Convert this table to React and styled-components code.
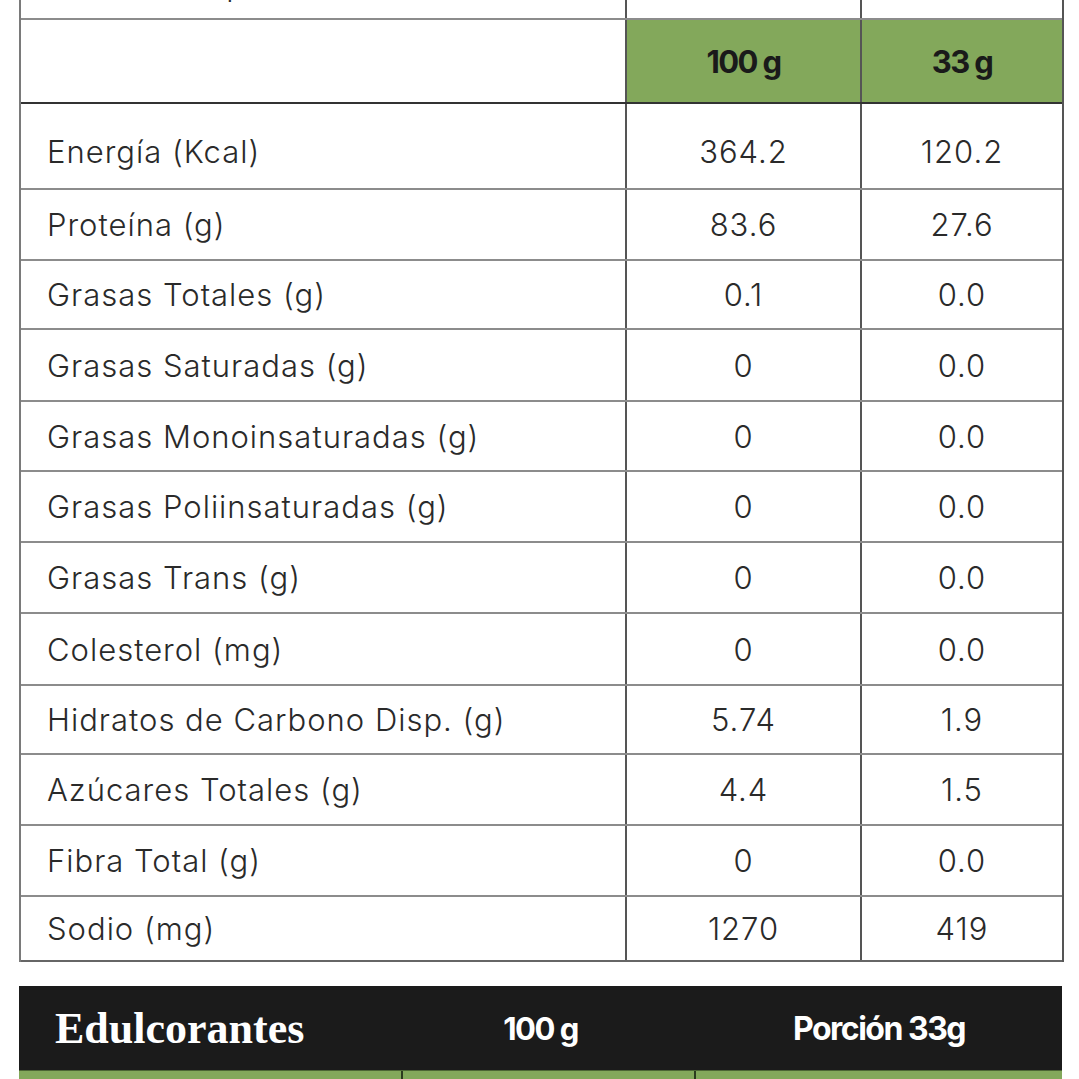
import styled, { createGlobalStyle } from "styled-components";

const GlobalStyle = createGlobalStyle`
  html, body {
    margin: 0;
    padding: 0;
    background: #ffffff;
  }
  body {
    font-family: Inter, "Open Sans", "Liberation Sans", sans-serif;
    color: #2a2a2a;
  }
`;

const Page = styled.div`
  width: 1079px;
  height: 1079px;
  overflow: hidden;
  padding-left: 19px;
  box-sizing: border-box;
`;

const Table = styled.div`
  width: 1045px;
  border-left: 2px solid #7a7a7a;
  border-right: 2px solid #555;
  box-sizing: border-box;
`;

const Row = styled.div`
  display: grid;
  grid-template-columns: 606px 235px 1fr;
  height: ${(p) => p.$h}px;
  border-bottom: 2px solid ${(p) => (p.$dark ? "#333" : p.$end ? "#666" : "#8c8c8c")};
  box-sizing: border-box;
  overflow: hidden;
`;

const Cell = styled.div`
  display: flex;
  align-items: ${(p) => (p.$top ? "flex-end" : "center")};
  justify-content: ${(p) => (p.$label ? "flex-start" : "center")};
  padding-left: ${(p) => (p.$label ? "26px" : "0")};
  padding-top: ${(p) => p.$pt || 0}px;
  border-right: ${(p) => (p.$last ? "none" : "2px solid #555")};
  background: ${(p) => (p.$green ? "#83a85b" : "transparent")};
  font-size: 31px;
  font-weight: 300;
  letter-spacing: 1px;
  white-space: nowrap;
  overflow: hidden;
  box-sizing: border-box;
`;

const Clipped = styled.span`
  margin-bottom: 15px;
`;

const HeadText = styled.span`
  font-family: Inter, "Liberation Sans", sans-serif;
  font-weight: 700;
  font-size: 31px;
  letter-spacing: -1.6px;
  color: #1a1a1a;
`;

const Sweet = styled.div`
  margin-top: 24px;
  width: 1043px;
  background: #1b1b1b;
`;

const SweetHead = styled.div`
  display: grid;
  grid-template-columns: 384px 293px 1fr;
  height: 84px;
  align-items: center;
`;

const SweetTitle = styled.div`
  font-family: "Liberation Serif", "DejaVu Serif", serif;
  font-weight: 700;
  font-size: 44px;
  color: #ffffff;
  padding-left: 36px;
`;

const SweetCol = styled.div`
  font-family: Inter, "Liberation Sans", sans-serif;
  font-weight: 700;
  font-size: ${(p) => p.$fs || 31}px;
  letter-spacing: -1.5px;
  color: #ffffff;
  text-align: center;
  padding-right: ${(p) => p.$pr || 0}px;
`;

const GreenRow = styled.div`
  display: grid;
  grid-template-columns: 384px 293px 1fr;
  height: 40px;
  background: #83a85b;
  border-top: 1px solid #4c6634;
`;

const GreenCell = styled.div`
  border-right: ${(p) => (p.$last ? "none" : "2px solid #2b3a1f")};
`;

const rows = [
  ["Energía (Kcal)", "364.2", "120.2"],
  ["Proteína (g)", "83.6", "27.6"],
  ["Grasas Totales (g)", "0.1", "0.0"],
  ["Grasas Saturadas (g)", "0", "0.0"],
  ["Grasas Monoinsaturadas (g)", "0", "0.0"],
  ["Grasas Poliinsaturadas (g)", "0", "0.0"],
  ["Grasas Trans (g)", "0", "0.0"],
  ["Colesterol (mg)", "0", "0.0"],
  ["Hidratos de Carbono Disp. (g)", "5.74", "1.9"],
  ["Azúcares Totales (g)", "4.4", "1.5"],
  ["Fibra Total (g)", "0", "0.0"],
  ["Sodio (mg)", "1270", "419"],
];

const heights = [86, 71, 69, 72, 70, 71, 71, 72, 69, 71, 71, 65];

export default function App() {
  return (
    <Page>
      <GlobalStyle />
      <Table>
        <Row $h={20}>
          <Cell $label $top>
            <Clipped>Tamaño de porción</Clipped>
          </Cell>
          <Cell $top />
          <Cell $top $last />
        </Row>
        <Row $h={84} $dark>
          <Cell $label />
          <Cell $green>
            <HeadText>100 g</HeadText>
          </Cell>
          <Cell $green $last>
            <HeadText>33 g</HeadText>
          </Cell>
        </Row>
        {rows.map(([label, a, b], i) => (
          <Row key={label} $h={heights[i]} $end={i === rows.length - 1}>
            <Cell $label $pt={i === 0 ? 10 : 0}>{label}</Cell>
            <Cell $pt={i === 0 ? 10 : 0}>{a}</Cell>
            <Cell $last $pt={i === 0 ? 10 : 0}>{b}</Cell>
          </Row>
        ))}
      </Table>
      <Sweet>
        <SweetHead>
          <SweetTitle>Edulcorantes</SweetTitle>
          <SweetCol $pr={18}>100 g</SweetCol>
          <SweetCol $fs={32}>Porción 33g</SweetCol>
        </SweetHead>
        <GreenRow>
          <GreenCell />
          <GreenCell />
          <GreenCell $last />
        </GreenRow>
      </Sweet>
    </Page>
  );
}
